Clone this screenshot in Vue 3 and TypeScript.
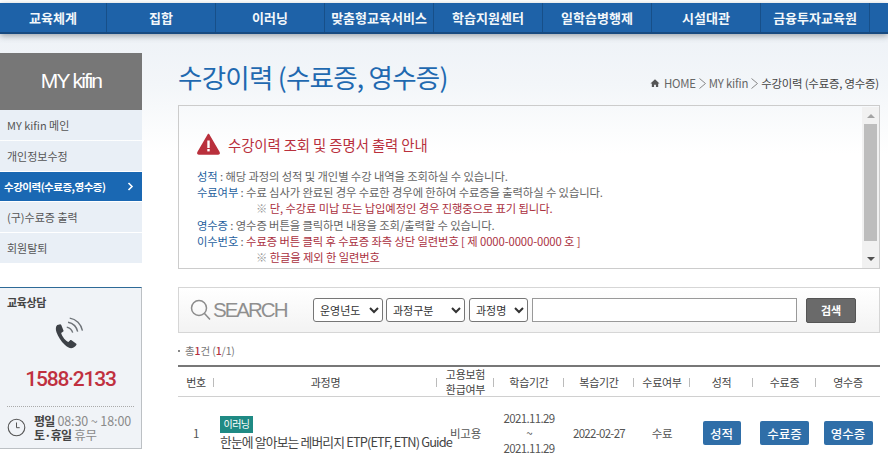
<script setup lang="ts">
const navItems: string[] = ['교육체계', '집합', '이러닝', '맞춤형교육서비스', '학습지원센터', '일학습병행제', '시설대관', '금융투자교육원']
const sideItems: { label: string; active?: boolean }[] = [
  { label: 'MY kifin 메인' },
  { label: '개인정보수정' },
  { label: '수강이력(수료증,영수증)', active: true },
  { label: '(구)수료증 출력' },
  { label: '회원탈퇴' },
]
const heads: string[] = ['번호', '과정명', '고용보험\n환급여부', '학습기간', '복습기간', '수료여부', '성적', '수료증', '영수증']
</script>

<template>
  <div class="page">
    <nav class="nav">
      <a v-for="item in navItems" :key="item" class="nav-item">{{ item }}</a>
    </nav>
    <div class="body">
      <aside class="side">
        <h2 class="side-title">MY kifin</h2>
        <ul class="side-list">
          <li v-for="s in sideItems" :key="s.label" class="side-item" :class="{ active: s.active }">
            <span>{{ s.label }}</span>
            <svg v-if="s.active" class="chev" width="7" height="9" viewBox="0 0 7 9"><path d="M1.5 1l3.5 3.5L1.5 8" fill="none" stroke="#fff" stroke-width="1.6" /></svg>
          </li>
        </ul>
        <section class="consult">
          <h3 class="consult-title">교육상담</h3>
          <svg class="phone" width="36" height="36" viewBox="0 0 34 34">
            <path d="M4 7.500c-1.500 1.400-1.700 4-.7 6.800 1.500 4.200 4.200 8.500 7.800 11.800 2.400 2.200 5 3.700 7.200 3.200 1.600-.4 2.900-1.500 3.700-2.800.4-.6.200-1.100-.3-1.500l-4.200-3c-.6-.4-1.100-.3-1.500.1l-1.500 1.600c-2.300-.9-5.800-5-6.800-8.600l1.700-1.200c.5-.4.700-.9.400-1.500L7.800 7.600c-.4-.7-1-.9-1.600-.6z" fill="#3d4147" />
            <path d="M13 9.500c2.700.6 4.800 2.600 5.600 5.300M14.200 5c4.600.9 8 4.200 9.100 8.800M15.800 1c6 .9 10.800 5.800 12 11.800" fill="none" stroke="#6e7378" stroke-width="1.300" />
          </svg>
          <div class="tel">1588·2133</div>
          <div class="hours">
            <svg width="19" height="19" viewBox="0 0 19 19"><circle cx="9.500" cy="9.500" r="8.300" fill="none" stroke="#555" stroke-width="1.100" /><path d="M9.500 4.500v5.200h3.200" fill="none" stroke="#555" /></svg>
            <div class="hours-text">
              <div><b>평일</b> 08:30 ~ 18:00</div>
              <div><b>토·휴일</b> 휴무</div>
            </div>
          </div>
        </section>
      </aside>

      <main class="main">
        <header class="head">
          <h1 class="title">수강이력 (수료증, 영수증)</h1>
          <div class="crumb">
            <svg class="home" width="10" height="10" viewBox="0 0 11 10"><path d="M5.500 1L.5 5.500h1.500V9.500h2.500V7h2v2.500h2.500V5.500h1.500z" fill="#555" /></svg>
            <span>HOME</span>
            <svg class="sep" width="9" height="11" viewBox="0 0 9 11"><path d="M1.500 .5l6 5-6 5" fill="none" stroke="#888" /></svg>
            <span>MY kifin</span>
            <svg class="sep" width="9" height="11" viewBox="0 0 9 11"><path d="M1.500 .5l6 5-6 5" fill="none" stroke="#888" /></svg>
            <span class="here">수강이력 (수료증, 영수증)</span>
          </div>
        </header>

        <section class="notice">
          <div class="notice-body">
            <h3 class="notice-title">
              <svg width="23" height="22" viewBox="0 0 23 22"><path d="M11.500 1.500L1 19.500c-.4.8 0 1.500 1 1.500h19c1 0 1.400-.7 1-1.500z" fill="#b9303c" stroke="#b9303c" stroke-linejoin="round" stroke-width="1.500" /><rect x="10.300" y="7.500" width="2.400" height="7.500" fill="#fff" /><rect x="10.300" y="16" width="2.400" height="2.400" fill="#fff" /></svg>
              <span>수강이력 조회 및 증명서 출력 안내</span>
            </h3>
            <p><b>성적</b> : 해당 과정의 성적 및 개인별 수강 내역을 조회하실 수 있습니다.</p>
            <p><b>수료여부</b> : 수료 심사가 완료된 경우 수료한 경우에 한하여 수료증을 출력하실 수 있습니다.</p>
            <p class="indent"><em>※</em> <span class="red">단, 수강료 미납 또는 납입예정인 경우 진행중으로 표기 됩니다.</span></p>
            <p><b>영수증</b> : 영수증 버튼을 클릭하면 내용을 조회/출력할 수 있습니다.</p>
            <p><b>이수번호</b> : <span class="red">수료증 버튼 클릭 후 수료증 좌측 상단 일련번호 [ 제 0000-0000-0000 호 ]</span></p>
            <p class="indent"><em>※</em> <span class="red">한글을 제외 한 일련번호</span></p>
          </div>
          <div class="scroll">
            <span class="arrow up"></span>
            <span class="thumb"></span>
            <span class="arrow down"></span>
          </div>
        </section>

        <form class="search" @submit.prevent>
          <div class="search-label">
            <svg width="21" height="22" viewBox="0 0 21 22"><circle cx="9" cy="9" r="7.500" fill="none" stroke="#8c8c8c" stroke-width="1.500" /><path d="M14.500 14.500l5.500 6" stroke="#8c8c8c" stroke-width="1.600" /></svg>
            <span>SEARCH</span>
          </div>
          <select class="sel s1"><option>운영년도</option></select>
          <select class="sel s2"><option>과정구분</option></select>
          <select class="sel s3"><option>과정명</option></select>
          <input class="kw" type="text" />
          <button class="go" type="submit">검색</button>
        </form>

        <div class="total"><i></i>총<b>1</b>건 (<b>1</b>/1)</div>

        <div class="table">
          <div class="tr th">
            <div v-for="h in heads" :key="h" class="cell">{{ h }}</div>
          </div>
          <div class="tr row">
            <div class="cell num">1</div>
            <div class="cell course"><span class="badge">이러닝</span><span class="cname">한눈에 알아보는 레버리지 ETP(ETF, ETN) Guide</span></div>
            <div class="cell">비고용</div>
            <div class="cell dates">2021.11.29<br />~<br />2021.11.29</div>
            <div class="cell review">2022-02-27</div>
            <div class="cell">수료</div>
            <div class="cell"><button class="btn">성적</button></div>
            <div class="cell"><button class="btn">수료증</button></div>
            <div class="cell"><button class="btn">영수증</button></div>
          </div>
        </div>
      </main>
    </div>
  </div>
</template>

<style>
html, body { margin: 0; background: #fff; overflow: hidden; }
</style>

<style scoped>
.page {
  height: 468px;
  overflow: hidden;
  padding-top: 3px;
  box-sizing: border-box;
  background: #fff;
  font-family: "Noto Sans CJK KR", "Noto Sans", sans-serif;
  color: #444;
}
.nav {
  display: grid;
  grid-template-columns: 107px repeat(7, 109px) 1fr;
  height: 31px;
  box-sizing: border-box;
  background: #1e62a8;
  border-bottom: 2px solid #174a80;
  position: relative;
  z-index: 1;
  box-shadow: 0 2px 6px rgba(60, 70, 80, .45);
}
.nav-item {
  border-right: 1px solid #174e88;
  color: #fff;
  font-size: 13px;
  font-weight: 700;
  line-height: 29px;
  text-align: center;
  opacity: .95;
}
.body {
  display: flex;
  height: 434px;
  background: linear-gradient(#eef2f7 0, #f3f6f9 50px, #fff 120px);
}
.side { width: 142px; flex: none; padding-top: 19px; }
.side-title {
  margin: 0;
  height: 57px;
  background: #777;
  color: #fff;
  font-size: 21px;
  font-weight: 400;
  line-height: 56px;
  text-align: center;
  letter-spacing: -1.700px;
  font-family: "Liberation Sans", sans-serif;
}
.side-list { list-style: none; margin: 0; padding: 0; }
.side-item {
  display: flex;
  align-items: center;
  justify-content: space-between;
  height: 30px;
  margin-bottom: 1px;
  padding: 0 7px;
  background: #e9eff6;
  font-size: 11px;
  color: #555;
  line-height: 30px;
}
.side-item.active {
  background: #1a68b3;
  color: #fff;
  font-weight: 700;
  font-size: 10.500px;
  letter-spacing: -.5px;
  padding: 0 8px 0 4px;
  height: 29px;
  margin-bottom: 1px;
}
.consult {
  margin-top: 24px;
  height: 162px;
  box-sizing: border-box;
  padding: 8px 7px 0;
  background: #f0f3f7;
  border-top: 1px solid #2d6a97;
  border-right: 1px solid #bcc0c4;
  border-bottom: 1px solid #bcc0c4;
}
.consult-title { margin: 0; font-size: 11px; line-height: 13px; font-weight: 700; color: #444; letter-spacing: -.4px; }
.phone { display: block; margin: 8px auto 0 46px; }
.tel {
  margin-top: 14px;
  color: #c0303f;
  font-family: Roboto, "Noto Sans", sans-serif;
  font-size: 21px;
  font-weight: 500;
  letter-spacing: -1.200px;
  line-height: 24px;
  text-align: center;
}
.hours {
  display: flex;
  align-items: center;
  gap: 8px;
  margin-top: 15px;
  padding-top: 7px;
  border-top: 1px dotted #aaa;
}
.hours-text { font-size: 12.500px; line-height: 13.500px; color: #8a8a8a; white-space: nowrap; letter-spacing: -.1px; }
.hours-text b { color: #444; font-size: 12px; letter-spacing: -.7px; }

.main { width: 702px; margin-left: 36px; flex: none; }
.head {
  display: flex;
  justify-content: space-between;
  align-items: flex-start;
  height: 71px;
  box-sizing: border-box;
  padding: 24px 0 0;
}
.title {
  margin: 0;
  color: #1f69b0;
  font-size: 26.500px;
  font-weight: 400;
  line-height: 38px;
  letter-spacing: -.75px;
  white-space: nowrap;
}
.crumb {
  display: flex;
  align-items: center;
  gap: 2px;
  margin-top: 17px;
  margin-right: 1px;
  font-size: 11.400px;
  color: #666;
  line-height: 16px;
  letter-spacing: -.2px;
  white-space: nowrap;
}
.crumb .home { margin-right: 2px; }
.crumb .here { color: #444; }

.notice {
  display: flex;
  height: 164px;
  box-sizing: border-box;
  border: 1px solid #ccc;
}
.notice-body { flex: 1; padding: 26px 0 0 18px; min-width: 0; }
.notice-title {
  display: flex;
  align-items: center;
  gap: 8px;
  margin: 0 0 12px;
  height: 24px;
  color: #b9303c;
  font-size: 14.400px;
  font-weight: 400;
  letter-spacing: -.1px;
}
.notice p {
  margin: 0;
  font-size: 11.300px;
  line-height: 16.200px;
  color: #666;
  white-space: nowrap;
  letter-spacing: -.1px;
}
.notice p b { color: #1f5f9e; font-weight: 400; }
.notice .red { color: #aa303e; }
.notice .indent { padding-left: 59px; }
.notice .indent em { font-style: normal; color: #999; }
.scroll {
  width: 17px;
  flex: none;
  background: #f1f1f1;
  margin: 1px 0 0;
  display: flex;
  flex-direction: column;
  align-items: center;
}
.thumb { display: block; width: 13px; height: 117px; background: #bdbdbd; margin-top: 6px; }
.arrow { display: block; width: 0; height: 0; border-left: 4px solid transparent; border-right: 4px solid transparent; }
.arrow.up { border-bottom: 4px solid #a3a3a3; margin-top: 7px; }
.arrow.down { border-top: 4px solid #505050; margin-top: 16px; }

.search {
  display: flex;
  align-items: center;
  height: 46px;
  box-sizing: border-box;
  margin-top: 18px;
  padding-left: 11px;
  background: linear-gradient(#fff, #f3f3f3);
  border: 1px solid #d6d6d6;
}
.search-label {
  display: flex;
  align-items: center;
  gap: 2px;
  width: 123px;
  color: #8f8f8f;
  font-family: "Liberation Sans", sans-serif;
  font-size: 20.500px;
  letter-spacing: -2px;
}
.sel {
  height: 24px;
  box-sizing: border-box;
  margin-right: 4px;
  padding: 0 2px;
  background: #fff;
  border: 1px solid #767676;
  border-radius: 3px;
  font-family: inherit;
  font-size: 11px;
  color: #333;
}
.s1 { width: 70px; margin-right: 3px; }
.s2 { width: 79px; }
.s3 { width: 59px; }
.kw { width: 265px; height: 24px; box-sizing: border-box; border: 1px solid #999; background: #fff; margin-right: 9px; }
.go {
  width: 50px;
  height: 25px;
  border: 1px solid #555;
  border-radius: 2px;
  background: #6a6a6a;
  color: #fff;
  font-family: inherit;
  font-size: 11px;
  font-weight: 700;
  padding: 0;
}

.total {
  display: flex;
  align-items: center;
  height: 15px;
  margin-top: 10px;
  font-size: 10.500px;
  color: #777;
  letter-spacing: -.1px;
}
.total i { width: 2px; height: 2px; background: #888; margin-right: 5px; }
.total b { color: #b3303c; font-weight: 500; }

.table { margin-top: 7px; }
.tr {
  display: grid;
  grid-template-columns: 36px 223px 57px 70px 70px 56px 63px 63px 64px;
}
.th {
  height: 32px;
  border-top: 2px solid #777;
  border-bottom: 1px solid #d0d0d0;
  box-sizing: border-box;
}
.th .cell {
  position: relative;
  white-space: pre-line;
  font-size: 11px;
  line-height: 15px;
  color: #444;
}
.th .cell:not(:last-child)::after {
  content: "";
  position: absolute;
  right: 0;
  top: 50%;
  width: 1px;
  height: 9px;
  margin-top: -4px;
  background: #bbb;
}
.cell {
  display: flex;
  align-items: center;
  justify-content: center;
  text-align: center;
  font-size: 11.500px;
  letter-spacing: -.3px;
  color: #555;
}
.row { height: 72px; }
.course {
  flex-direction: column;
  align-items: flex-start;
  padding-left: 6px;
  white-space: nowrap;
  text-align: left;
  padding-top: 12px;
  justify-content: flex-start;
}
.badge {
  background: #1f8a84;
  color: #fff;
  width: 33px;
  height: 17px;
  line-height: 16px;
  font-size: 10px;
  text-align: center;
  letter-spacing: -.5px;
  display: block;
  margin-top: 7px;
}
.cname { font-size: 12.800px; line-height: 17px; letter-spacing: -.85px; color: #444; }
.dates { line-height: 15px; display: block; padding-top: 14px; letter-spacing: -.65px; }
.review { letter-spacing: -.7px; }
.btn {
  height: 24px;
  border: 0;
  border-radius: 2px;
  background: #2f6ea8;
  color: #fff;
  font-family: inherit;
  font-size: 12.500px;
  font-weight: 500;
  padding: 0;
  letter-spacing: 0;
}
.row .cell:nth-child(7) .btn { width: 38px; }
.row .cell:nth-child(8) .btn, .row .cell:nth-child(9) .btn { width: 49px; }
</style>
